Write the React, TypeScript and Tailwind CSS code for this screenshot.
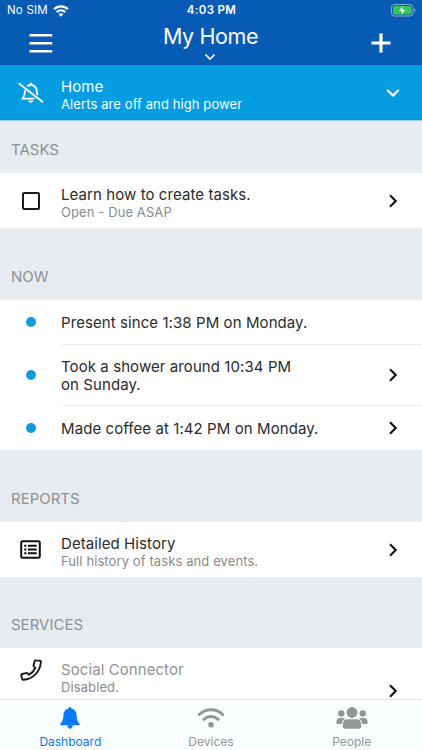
import React from 'react'

type RowProps = {
    icon: React.ReactNode
    title: React.ReactNode
    subtitle?: string
    arrow?: boolean
    muted?: boolean
    divider?: boolean
    className: string
}

const WifiIcon = ({ className }: { className: string }) => (
    <svg viewBox="0 0 26 20" className={className} fill="none" stroke="currentColor" strokeWidth="3.6">
        <path d="M1.5 7.2C8 .8 18 .8 24.5 7.2" />
        <path d="M5.800 11.9c4.200-3.900 10.200-3.900 14.400 0" />
        <path d="M13 19.5l-4-4.100c2.300-2.100 5.700-2.100 8 0z" fill="currentColor" stroke="none" />
    </svg>
)

const TabWifiIcon = () => (
    <svg viewBox="0 0 28 20" className="w-7 h-5" fill="none" stroke="currentColor" strokeWidth="3" strokeLinecap="round">
        <path d="M2.2 6.5C9 .2 19 .2 25.8 6.5" />
        <path d="M6.9 11.3c4.200-3.700 10-3.700 14.200 0" />
        <circle cx="14" cy="16.700" r="2.800" fill="currentColor" stroke="none" />
    </svg>
)

const BellOffIcon = () => (
    <svg viewBox="0 0 26 22" className="w-[26px] h-[22px]" fill="none" stroke="currentColor" strokeWidth="1.8">
        <path d="M7.300 8C6.800 13 6.300 14.200 4.600 16.700H16.500" />
        <path d="M9.200 4.200C13.500 1.500 18.300 3.800 18.700 8.500c.1 1.800.3 3.300.8 4.700" />
        <path d="M13 .8v2.200" strokeWidth="2.400" />
        <path d="M10.300 18.400h5c-.3 3-4.700 3-5 0z" fill="currentColor" stroke="none" />
        <path d="M.7 1.300L25 20.200" strokeWidth="1.900" />
    </svg>
)

const BellIcon = () => (
    <svg viewBox="0 0 20 22" className="w-5 h-[22px]" fill="currentColor">
        <path d="M10 0c.9 0 1.300.6 1.300 1.500C14.600 2.200 16.400 4.800 16.600 8c.2 4.700 1 6.600 3 8.700.6.700.3 1.600-.6 1.600H1c-.9 0-1.200-.9-.6-1.600C2.400 14.600 3.200 12.700 3.400 8c.2-3.200 2-5.800 5.300-6.500C8.700.6 9.100 0 10 0z" />
        <path d="M7.300 18.200h5.400c0 4.600-5.400 4.600-5.400 0z" />
    </svg>
)

const PeopleIcon = () => (
    <svg viewBox="0 0 32 22" className="w-8 h-[22px]" fill="currentColor">
        <circle cx="16" cy="5.500" r="5.400" />
        <circle cx="5.300" cy="6.400" r="3.200" />
        <circle cx="26.700" cy="6.400" r="3.200" />
        <path d="M11.500 12.300h9c2.800 0 4.700 2.200 4.700 5v1.900c0 1.500-1 2.500-2.500 2.500H9.300c-1.500 0-2.500-1-2.500-2.500v-1.900c0-2.800 1.900-5 4.700-5z" />
        <path d="M4 10.900h3.400c1 0 1.800.3 2.300.7-2.300.8-3.700 2.700-4 5.400H1.600C.8 17 .4 16.500.4 15.700v-1.300c0-2 1.500-3.500 3.600-3.500z" />
        <path d="M28 10.900h-3.400c-1 0-1.800.3-2.300.7 2.300.8 3.700 2.700 4 5.400h4.100c.8 0 1.200-.5 1.200-1.300v-1.300c0-2-1.500-3.500-3.600-3.500z" />
    </svg>
)

const ListIcon = () => (
    <svg viewBox="0 0 21 19" className="w-[21px] h-[19px]" fill="none" stroke="#111" strokeWidth="2">
        <rect x="1.200" y="1.300" width="18.600" height="16.400" rx="1.500" />
        <path d="M8 5.700h8.700M8 9.500h8.700M8 13.300h8.700" />
        <path d="M4.200 5.700h2.200M4.200 9.500h2.200M4.200 13.300h2.200" />
    </svg>
)

const PhoneIcon = () => (
    <svg viewBox="0 0 22 22" className="w-[22px] h-[22px]" fill="none" stroke="#1b1b1b" strokeWidth="1.900" strokeLinejoin="round">
        <path d="M15.800 1.300L19.900 1.700C20.600 1.800 21 2.200 20.900 3C20.200 12.800 12.900 20.300 3.300 20.700C2.500 20.700 2.100 20.300 2 19.600L1.300 16.300C1.200 15.600 1.500 15.200 2.100 15L6.200 14.100C6.800 14 7.300 14.100 7.700 14.500L9 15.700C11.800 14.200 14 11.900 15.300 9L14 7.700C13.600 7.200 13.500 6.700 13.600 6.100L14.600 2.200C14.800 1.500 15.100 1.200 15.800 1.300Z" />
    </svg>
)

const Chevron = () => (
    <svg viewBox="0 0 10 14" className="w-[10px] h-[14px] mr-6 shrink-0" fill="none" stroke="#161616" strokeWidth="2.200">
        <path d="M2 1.300L7.700 7 2 12.700" />
    </svg>
)

const Dot = () => <div className="w-[10px] h-[10px] rounded-full bg-[#109be0]" />

function Row({ icon, title, subtitle, arrow, muted, divider, className }: RowProps) {
    return (
        <div className={`flex shrink-0 bg-white ${className}`}>
            <div className={`w-[61px] flex justify-center items-center ${divider ? 'pb-px' : ''}`}>{icon}</div>
            <div className={`flex-1 flex items-center justify-between ${divider ? 'border-b border-[#eeeff0]' : ''}`}>
                <div className={subtitle ? 'self-start pt-[13px]' : 'pt-px'}>
                    <div className={`text-[15px] leading-[18px] tracking-[0.08px] ${muted ? 'text-[#929292]' : 'text-[#2b2b2b]'}`}>{title}</div>
                    {subtitle && <div className="text-[13px] leading-4 tracking-[0.1px] text-[#898b8c]">{subtitle}</div>}
                </div>
                {arrow && <Chevron />}
            </div>
        </div>
    )
}

function SectionTitle({ children, className }: { children: string; className: string }) {
    return (
        <div className={`shrink-0 flex items-end pl-[11px] pb-[13px] text-[15px] leading-5 text-[#8d9193] ${className}`}>
            {children}
        </div>
    )
}

export default function App() {
    return (
        <div className="w-[422px] h-[750px] flex flex-col overflow-hidden bg-[#e7ecf0] font-['Inter','Liberation_Sans',sans-serif]">
            <header className="h-[65px] shrink-0 bg-[#085bb5] text-white">
                <div className="h-[21px] grid grid-cols-3 items-center pl-[7px] pr-[6px] text-[11.5px]">
                    <div className="flex items-center gap-[5px]">
                        <span className="tracking-[0.2px]">No SIM</span>
                        <WifiIcon className="w-[16px] h-3" />
                    </div>
                    <span className="text-center font-semibold tracking-[0.3px]">4:03 PM</span>
                    <svg viewBox="0 0 25 13" className="w-[25px] h-[13px] justify-self-end">
                        <rect x=".5" y=".5" width="21.500" height="11.500" rx="3" fill="none" stroke="#83add9" />
                        <rect x="2" y="2" width="18.500" height="8.500" rx="1.700" fill="#35c759" />
                        <path d="M23.300 4.300v4c1.500-.6 1.500-3.400 0-4z" fill="#83add9" />
                        <path d="M12.500 1.300L7.500 7h3.200l-1 4.500 5.300-6H11.500z" fill="#fff" stroke="#168b63" strokeWidth=".4" />
                    </svg>
                </div>
                <div className="h-11 grid grid-cols-3 pl-[29px] pr-[31px]">
                    <svg viewBox="0 0 24 20" className="w-6 h-5 mt-3" stroke="#fff" strokeWidth="2.600">
                        <path d="M.5 2.200h22.700M.5 10.200h22.700M.5 18.200h22.700" />
                    </svg>
                    <div className="flex flex-col items-center pl-px">
                        <h1 className="text-[21.5px] leading-[30px] tracking-[-0.4px] whitespace-nowrap">My Home</h1>
                        <svg viewBox="0 0 12 8" className="w-3 h-2 mt-[2px]" fill="none" stroke="#fff" strokeWidth="1.700">
                            <path d="M1.500 1.700L6 6l4.500-4.300" />
                        </svg>
                    </div>
                    <svg viewBox="0 0 20 20" className="w-5 h-5 mt-3 justify-self-end" stroke="#fff" strokeWidth="3.200">
                        <path d="M.5 10h19M10 .5v19" />
                    </svg>
                </div>
            </header>

            <div className="h-14 shrink-0 flex bg-[#049de2] border-b border-[#91cff0] text-white">
                <div className="w-[61px] flex justify-center items-center">
                    <BellOffIcon />
                </div>
                <div className="flex-1 pt-[13px]">
                    <div className="text-[15px] leading-[18px] tracking-[0.08px]">Home</div>
                    <div className="text-[13px] leading-4 tracking-[0.1px]">Alerts are off and high power</div>
                </div>
                <svg viewBox="0 0 14 10" className="w-[14px] h-[10px] mr-[22px] self-center" fill="none" stroke="#fff" strokeWidth="2.300">
                    <path d="M1.300 2L7 7.500 12.700 2" />
                </svg>
            </div>

            <main className="flex-1 min-h-0 flex flex-col overflow-hidden">
                <SectionTitle className="h-[52px]">TASKS</SectionTitle>
                <Row
                    className="h-[55px]"
                    icon={<div className="w-[18px] h-[18px] border-2 border-[#1c1c1c] rounded-[2px]" />}
                    title="Learn how to create tasks."
                    subtitle="Open - Due ASAP"
                    arrow
                />

                <SectionTitle className="h-[72px]">NOW</SectionTitle>
                <Row className="h-[45px]" icon={<Dot />} title="Present since 1:38 PM on Monday." divider />
                <Row className="h-[61px]" icon={<Dot />} title={<>Took a shower around 10:34 PM<br />on Sunday.</>} arrow divider />
                <Row className="h-11" icon={<Dot />} title="Made coffee at 1:42 PM on Monday." arrow />

                <SectionTitle className="h-[72px]">REPORTS</SectionTitle>
                <Row className="h-[55px]" icon={<ListIcon />} title="Detailed History" subtitle="Full history of tasks and events." arrow />

                <SectionTitle className="h-[71px]">SERVICES</SectionTitle>
                <Row
                    className="h-[86px]"
                    icon={<div className="self-start pt-[11px]"><PhoneIcon /></div>}
                    title="Social Connector"
                    subtitle="Disabled."
                    arrow
                    muted
                />
            </main>

            <nav className="h-[51px] shrink-0 grid grid-cols-3 bg-[#fafdfe] border-t border-[#dfe2e3] text-[12px] leading-4 text-[#929698]">
                <div className="flex flex-col items-center pt-[7px] text-[#087bfa]">
                    <BellIcon />
                    <span className="mt-[5px]">Dashboard</span>
                </div>
                <div className="flex flex-col items-center pt-2">
                    <TabWifiIcon />
                    <span className="mt-[6px]">Devices</span>
                </div>
                <div className="flex flex-col items-center pt-[7px]">
                    <PeopleIcon />
                    <span className="mt-[5px]">People</span>
                </div>
            </nav>
        </div>
    )
}
